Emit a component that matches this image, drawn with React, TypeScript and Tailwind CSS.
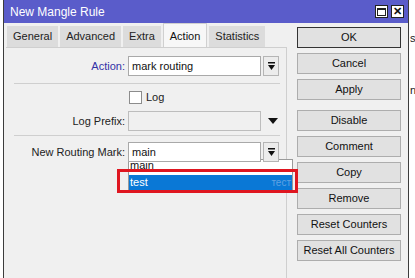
import React from "react";

const font = { fontFamily: '"Liberation Sans", Arial, sans-serif' };

const tabs = ["General", "Advanced", "Extra", "Action", "Statistics"];
const buttons = [
  "OK",
  "Cancel",
  "Apply",
  "Disable",
  "Comment",
  "Copy",
  "Remove",
  "Reset Counters",
  "Reset All Counters",
];

function DropIcon() {
  return (
    <svg width="9" height="9" viewBox="0 0 9 9">
      <rect x="1" y="0" width="7" height="1.5" fill="#111" />
      <path d="M1 3 H8 L4.5 8 Z" fill="#111" />
    </svg>
  );
}

function DropBtn() {
  return (
    <div className="w-[16px] h-[20px] ml-[2px] border border-[#b5b5b5] bg-[#ececec] flex items-center justify-center">
      <DropIcon />
    </div>
  );
}

function Field({ label, value, blue }: { label: string; value: string; blue?: boolean }) {
  return (
    <div className="flex items-center h-[20px] relative z-10">
      <div className={`w-[122px] text-right pr-[3px] ${blue ? "text-[#3232a6]" : "text-[#222]"}`}>
        {label}
      </div>
      <div className="w-[133px] h-[20px] border border-[#a9a9a9] bg-white px-[3px] flex items-center text-[#111]">
        {value}
      </div>
      <DropBtn />
    </div>
  );
}

export default function App() {
  return (
    <div className="w-[415px] h-[278px] bg-white relative overflow-hidden text-[11px]" style={font}>
      <div className="ml-[3px] w-[406px] h-[278px] border-l border-r border-[#3c3c3c] bg-[#f0f0f0] flex flex-col">
        <div className="h-[23px] bg-[#5a5cca] flex items-center justify-between pl-[6px] pr-[4px] text-white text-[12px]">
          <span>New Mangle Rule</span>
          <div className="flex gap-[3px]">
            <div className="w-[13px] h-[13px] bg-white border border-[#222] flex items-center justify-center">
              <div className="w-[9px] h-[8px] border border-[#222] border-t-2" />
            </div>
            <div className="w-[13px] h-[13px] bg-white border border-[#222] flex items-center justify-center text-[11px] font-bold leading-none text-[#111]">
              ✕
            </div>
          </div>
        </div>
        <div className="flex flex-1">
          <div className="w-[283px] flex flex-col">
            <div className="flex items-end h-[24px] pl-[3px] gap-[2px]">
              {tabs.map((t) => (
                <div
                  key={t}
                  className={
                    t === "Action"
                      ? "h-[24px] px-[6px] bg-[#f7f7f7] border border-b-0 border-[#d0d0d0] flex items-start pt-[4px] text-[#111]"
                      : "h-[21px] px-[6px] bg-[#dcdcdc] flex items-center text-[#222]"
                  }
                >
                  {t}
                </div>
              ))}
            </div>
            <div className="flex-1 ml-[2px] border-r border-t border-[#cfcfcf] bg-[#f0f0f0] relative pt-[8px]">
              <Field label="Action:" value="mark routing" blue />
              <div className="h-px bg-[#cfcfcf] ml-[8px] mr-[6px] mt-[7px]" />
              <div className="flex items-center h-[14px] mt-[6px] pl-[123px]">
                <div className="w-[13px] h-[13px] border border-[#8c8c8c] bg-white" />
                <span className="ml-[4px] text-[#222]">Log</span>
              </div>
              <div className="flex items-center h-[20px] mt-[7px]">
                <div className="w-[122px] text-right pr-[3px] text-[#222]">Log Prefix:</div>
                <div className="w-[133px] h-[20px] border border-[#bdbdbd] bg-[#f0f0f0]" />
                <svg width="10" height="6" viewBox="0 0 10 6" className="ml-[7px]">
                  <path d="M0 0 H10 L5 6 Z" fill="#111" />
                </svg>
              </div>
              <div className="h-px bg-[#cfcfcf] ml-[8px] mr-[6px] mt-[4px]" />
              <div className="mt-[6px]">
                <Field label="New Routing Mark:" value="main" />
              </div>
              <div className="absolute left-[122px] top-[111px] w-[165px] h-[32px] bg-white border border-[#9a9a9a] flex flex-col">
                <div className="h-[15px] px-[1px] text-[#111] leading-[11px] overflow-hidden">main</div>
                <div className="h-[15px] bg-[#0a78d6] text-white flex items-center justify-between px-[1px]">
                  <span>test</span>
                  <span className="text-[#5fa2e3] text-[10px]">тест</span>
                </div>
              </div>
              <div className="absolute left-[111px] top-[121px] w-[181px] h-[24px] border-[3px] border-[#df1620]" />
            </div>
          </div>
          <div className="w-[104px] ml-[10px] pt-[4px] flex flex-col gap-[5px]">
            {buttons.map((b) => (
              <div
                key={b}
                className={`h-[21px] flex items-center justify-center bg-[#e1e1e1] text-[#111] border ${
                  b === "OK" ? "border-[#333]" : "border-[#adadad]"
                } ${b === "Disable" ? "mt-[5px]" : ""}`}
              >
                {b}
              </div>
            ))}
          </div>
        </div>
      </div>
      <div className="absolute left-[410px] top-[30px] text-[11px] text-[#222]">s</div>
      <div className="absolute left-[410px] top-[82px] text-[11px] text-[#222]">n</div>
    </div>
  );
}
